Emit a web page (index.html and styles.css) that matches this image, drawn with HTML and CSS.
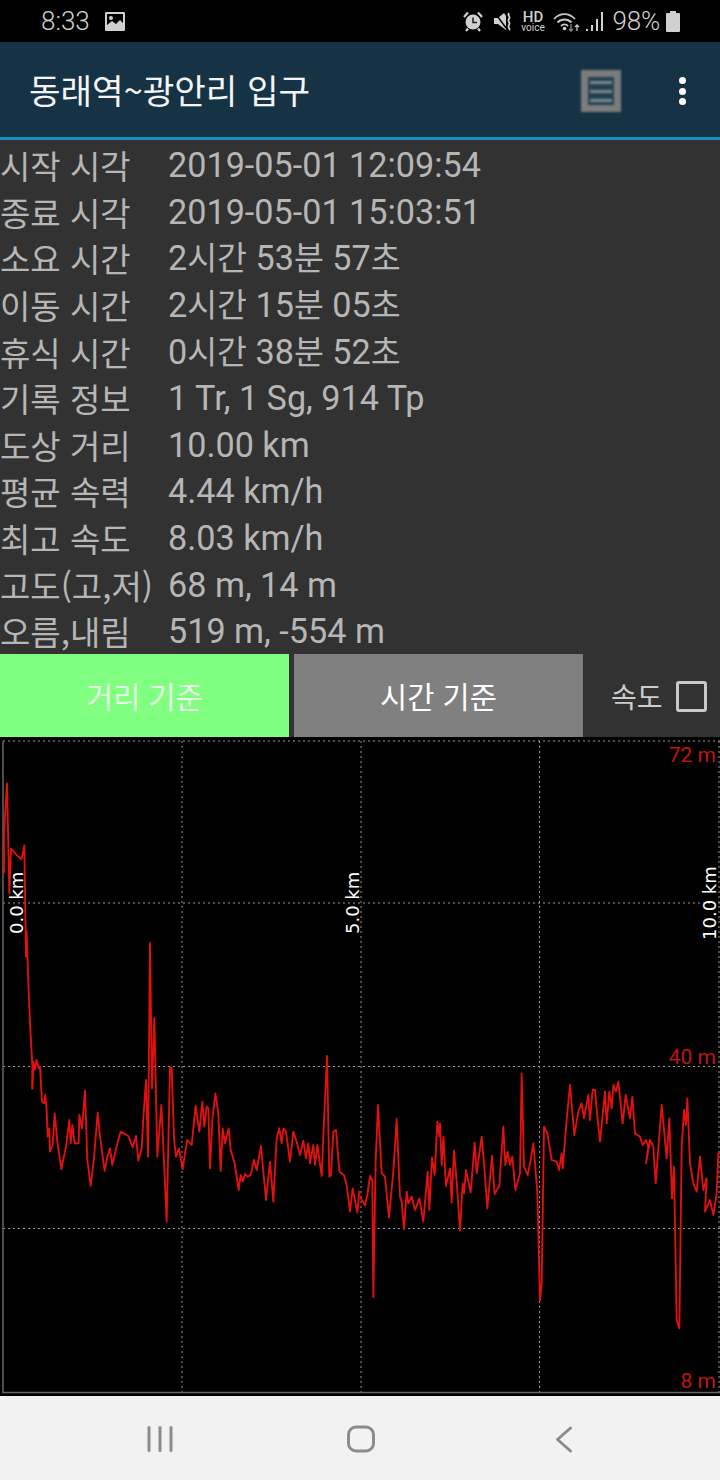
FILE: index.html
```html
<!DOCTYPE html>
<html lang="ko">
<head>
<meta charset="utf-8">
<title>동래역~광안리 입구</title>
<link rel="stylesheet" href="styles.css">
</head>
<body>
<div class="screen">
  <header class="statusbar">
    <div class="status-left">
      <span class="clock">8:33</span>
      <svg class="ic-image" width="20" height="19" viewBox="0 0 20 19"><path fill="#d0d0d0" fill-rule="evenodd" d="M1 0h18a1 1 0 0 1 1 1v17a1 1 0 0 1-1 1H1a1 1 0 0 1-1-1V1a1 1 0 0 1 1-1zm1 2v11l5-4 4 3 4-4 3 3V2z"/><circle cx="6" cy="6" r="2" fill="#d0d0d0"/></svg>
    </div>
    <div class="status-right">
      <svg class="ic-alarm" width="20" height="21" viewBox="0 0 20 21"><circle cx="10" cy="11" r="7.500" fill="#d0d0d0"/><path d="M10 6.500V11.500H14" fill="none" stroke="#222" stroke-width="1.600"/><path d="M1 6 5 1.500M19 6 15 1.500M3 20l2-2.500M17 20l-2-2.500" stroke="#d0d0d0" stroke-width="2.200" fill="none"/></svg>
      <svg class="ic-mute" width="20" height="21" viewBox="0 0 20 21"><path fill="#d0d0d0" d="M0 7h4l6-5 2 3v14l-8-6H0z"/><path d="M1 2 12 17" stroke="#000" stroke-width="1.500"/><path d="M15 2c-2 3 2 3 0 6s2 3 0 6 2 3 0 5" fill="none" stroke="#d0d0d0" stroke-width="1.800"/></svg>
      <span class="hd"><b class="hd-top">HD</b><b class="hd-sub">voice</b></span>
      <svg class="ic-wifi" width="27" height="21" viewBox="0 0 27 21"><path d="M1 8c6-6.500 15-6.500 21 0M4.500 11.500c4-4 10-4 14 0M8 15c2-2 5-2 7 0" fill="none" stroke="#c8c8c8" stroke-width="1.800"/><circle cx="11.500" cy="17.500" r="1.800" fill="#d0d0d0"/><path d="M18 13v7M16 18l2 2 2-2" fill="none" stroke="#8a8a8a" stroke-width="1.300"/><path d="M24 20v-6M22 16l2-2 2 2" fill="none" stroke="#c8c8c8" stroke-width="1.300"/></svg>
      <svg class="ic-signal" width="18" height="21" viewBox="0 0 18 21"><path d="M1 18v2M6 14v6M11 8v12M16 1v19" stroke="#d0d0d0" stroke-width="2" fill="none"/></svg>
      <span class="battery-pct">98%</span>
      <svg class="ic-battery" width="14" height="21" viewBox="0 0 14 21"><path fill="#d0d0d0" d="M4 0h6v2h3a1 1 0 0 1 1 1v17a1 1 0 0 1-1 1H1a1 1 0 0 1-1-1V3a1 1 0 0 1 1-1h3z"/></svg>
    </div>
  </header>

  <header class="appbar">
    <h1 class="title">동래역~광안리 입구</h1>
    <div class="menu-icon"><span class="menu-line"></span><span class="menu-line"></span><span class="menu-line"></span></div>
    <div class="overflow"><span class="dot"></span><span class="dot"></span><span class="dot"></span></div>
  </header>

  <dl class="info">
    <div class="row"><dt>시작 시각</dt><dd>2019-05-01 12:09:54</dd></div>
    <div class="row"><dt>종료 시각</dt><dd>2019-05-01 15:03:51</dd></div>
    <div class="row"><dt>소요 시간</dt><dd>2<span class="k">시간</span> 53<span class="k">분</span> 57<span class="k">초</span></dd></div>
    <div class="row"><dt>이동 시간</dt><dd>2<span class="k">시간</span> 15<span class="k">분</span> 05<span class="k">초</span></dd></div>
    <div class="row"><dt>휴식 시간</dt><dd>0<span class="k">시간</span> 38<span class="k">분</span> 52<span class="k">초</span></dd></div>
    <div class="row"><dt>기록 정보</dt><dd>1 Tr, 1 Sg, 914 Tp</dd></div>
    <div class="row"><dt>도상 거리</dt><dd>10.00 km</dd></div>
    <div class="row"><dt>평균 속력</dt><dd>4.44 km/h</dd></div>
    <div class="row"><dt>최고 속도</dt><dd>8.03 km/h</dd></div>
    <div class="row"><dt>고도(고,저)</dt><dd>68 m, 14 m</dd></div>
    <div class="row"><dt>오름,내림</dt><dd>519 m, -554 m</dd></div>
  </dl>

  <div class="controls">
    <button class="btn btn-on">거리 기준</button>
    <button class="btn btn-off">시간 기준</button>
    <div class="speed"><span class="speed-label">속도</span><span class="checkbox"></span></div>
  </div>

  <div class="chart">
    <svg class="chart-svg" width="720" height="659" viewBox="0 0 720 659">
      <g class="grid">
        <path d="M3 4H720M3 166H720M3 329.500H720M3 491.500H720M182 4V656M361 4V656M539.500 4V656M719 4V656"/>
      </g>
      <path class="axis" d="M3 4V655.500H720"/>
      <g class="trace">
        <g transform="translate(0 3) scale(.33333)">
          <polyline points="12,400 12,280 21,130 28,460 33,325 50,345 65,358 73,316 78,650 80,575 84,700 90,850 97,975 97,1048"/>
        </g>
        <g transform="translate(0 323) scale(.33333)">
          <polyline points="97,88 100,5 104,30 110,0 116,25 120,20 126,125 132,130 136,105 140,150 143,230 148,205 150,275 158,255 164,160 172,245 184,328 198,260 208,180 212,250 217,195 224,250 236,250 238,165 246,205 255,92 262,300 272,378 282,295 293,158 300,230 314,333 322,290 330,265 337,315 350,258 362,215 385,228 398,262 408,228 415,302 425,265 430,175 438,60 444,290 450,-351 456,85 463,-126 472,290 484,135 490,260 500,485 510,22 515,25 522,235 528,290 537,265 548,328 555,280 562,240 575,255 582,185 587,138 598,215 607,125 613,200 620,140 625,145 630,325 637,180 646,100 655,160 662,333 668,205 675,250 686,205 692,270 704,310 716,390 722,345 728,365 735,342 742,350 752,345 762,300 770,330 783,258 798,420 810,305 820,425 830,235 838,205 845,250 850,205 858,215 870,305 880,215 890,245 900,285 910,242 918,295 925,250 930,310 940,255 945,315 952,255 965,348 970,230 981,-12 988,350 993,345 1000,215 1008,210 1018,335 1032,345 1040,375 1050,455 1058,385 1072,458 1078,395 1080,400"/>
        </g>
        <g transform="translate(360 303) scale(.33333)">
          <polyline points="0,470 15,497 22,465 30,408 37,420 40,772 47,360 54,195 65,400 75,410 87,533 100,395 110,237 120,470 125,485 132,567 140,455 145,490 155,470 165,510 178,475 190,545 203,395 208,510 216,352 224,405 232,245 238,290 240,250 245,375 250,290 258,438 270,385 275,487 282,332 290,425 300,572 308,430 312,460 318,390 332,458 344,308 350,400 365,290 372,370 382,505 396,348 404,462 418,438 430,260 436,375 443,335 450,375 457,350 466,450 480,400 485,100 492,380 503,405 512,360 520,310 525,370 532,460 540,782 545,735 552,260 562,280 575,360 590,365 597,390 605,340 608,385 620,240 630,135 643,285 655,215 665,190 672,235 685,165 690,240 698,150 705,150 712,230 720,305 735,155 740,250 748,155 755,205 760,135 768,155 775,125 788,250 797,165 810,235 817,170 825,280 840,290 848,315 858,300 865,320 858,370 870,300 880,320 887,430 905,195 920,355 928,235 936,475 942,380 950,840 958,865 965,320 972,210 978,255 982,175 990,370 1000,430 1010,455 1020,350 1030,450 1040,415 1035,515 1050,480 1060,525 1070,460 1075,340 1080,340"/>
        </g>
      </g>
      <text class="y-label" x="716" y="25">72 m</text>
      <text class="y-label" x="716" y="327">40 m</text>
      <text class="y-label" x="716" y="651">8 m</text>
      <text class="x-label" transform="translate(23 197) rotate(-90)">0.0 km</text>
      <text class="x-label" transform="translate(359 197) rotate(-90)">5.0 km</text>
      <text class="x-label" transform="translate(716 203) rotate(-90)">10.0 km</text>
    </svg>
  </div>

  <nav class="navbar">
    <svg width="26" height="26" viewBox="0 0 26 26"><path d="M2 1.500V24.500M13 1.500V24.500M24 1.500V24.500" fill="none" stroke="#8c8c8c" stroke-width="3" stroke-linecap="round"/></svg>
    <svg width="28" height="28" viewBox="0 0 28 28"><rect x="1.500" y="2" width="25" height="24" rx="7.500" fill="none" stroke="#8c8c8c" stroke-width="3"/></svg>
    <svg width="18" height="27" viewBox="0 0 18 27"><path d="M15.500 2 2.500 13.500 15.500 25" fill="none" stroke="#8c8c8c" stroke-width="3" stroke-linecap="round" stroke-linejoin="round"/></svg>
  </nav>
</div>
</body>
</html>
```

FILE: styles.css
```css
* { box-sizing: border-box; }
html, body { margin: 0; padding: 0; }
body {
  width: 720px;
  height: 1480px;
  overflow: hidden;
  background: #323232;
  font-family: Roboto, "Noto Sans CJK KR", sans-serif;
}
.screen { display: flex; flex-direction: column; width: 720px; height: 1480px; }

.statusbar {
  height: 42px;
  background: #000;
  color: #d0d0d0;
  display: flex;
  align-items: center;
  justify-content: space-between;
  padding: 0 40px 0 41px;
}
.status-left, .status-right { display: flex; align-items: center; }
.clock { font-size: 26px; font-weight: 300; width: 64px; }
.battery-pct { font-size: 26px; font-weight: 300; margin: 0 6px 0 9px; letter-spacing: -.2px; }
.ic-alarm { margin-right: 11px; }
.hd { display: flex; flex-direction: column; align-items: center; margin: 0 8px 0 8px; width: 23px; line-height: 1; }
.hd-top { font-size: 15px; font-weight: 500; line-height: 12px; }
.hd-sub { font-size: 10px; font-weight: 400; line-height: 9px; }
.ic-wifi { margin-right: 6px; }

.appbar {
  height: 98px;
  background: #163345;
  border-bottom: 3px solid #1b8fbc;
  display: flex;
  align-items: center;
  padding: 3px 34px 0 29px;
}
.title {
  flex: 1;
  margin: 0 0 4px;
  font-size: 34.300px;
  font-weight: 400;
  color: #f4f4f4;
  font-family: "Noto Sans CJK KR", sans-serif;
}
.menu-icon {
  width: 40px;
  height: 42px;
  border: 7px solid #7c7c7c;
  background: #24404f;
  filter: blur(1px);
  display: flex;
  flex-direction: column;
  justify-content: center;
  gap: 6px;
  padding: 0 2px;
  margin-right: 58px;
}
.menu-line { height: 3px; flex: none; background: #7c8a94; }
.overflow { display: flex; flex-direction: column; gap: 3.500px; }
.dot { width: 7px; height: 7px; border-radius: 50%; background: #fff; }

.info { margin: 0; padding-top: 2px; height: 514px; }
.row { display: grid; grid-template-columns: 168px 1fr; height: 46.650px; line-height: 46.650px; font-size: 33px; color: #b6b6b6; white-space: nowrap; }
dt, dd { margin: 0; }
dt { font-family: "Noto Sans CJK KR", sans-serif; font-weight: 400; }
dd { font-size: 34.200px; font-weight: 400; font-family: Roboto, "Noto Sans CJK KR", sans-serif; }
.k { font-size: 32.500px; line-height: 0; font-family: "Noto Sans CJK KR", sans-serif; }

.controls { height: 83px; display: flex; align-items: stretch; }
.btn {
  width: 289px;
  border: 0;
  padding: 0 0 2px;
  font-family: "Noto Sans CJK KR", sans-serif;
  font-size: 29.500px;
  font-weight: 400;
}
.btn-on { background: #80ff80; color: #e6f8e6; }
.btn-off { background: #808080; color: #fff; margin-left: 5px; }
.speed { flex: 1; display: flex; align-items: center; padding-left: 28px; }
.speed-label { font-family: "Noto Sans CJK KR", sans-serif; font-weight: 400; font-size: 28px; color: #ccc; width: 65px; }
.checkbox { width: 31px; height: 31px; margin-top: 2px; border: 3px solid #c8c8c8; border-radius: 3px; }

.chart { height: 659px; background: #000; }
.chart-svg { display: block; }
.grid path { fill: none; stroke: #9a9a9a; stroke-width: 1; stroke-dasharray: 2 3; }
.axis { fill: none; stroke: #666; stroke-width: 1.500; }
.trace polyline { fill: none; stroke: #e41010; stroke-width: 5.500; stroke-linejoin: round; }
.y-label { font-family: Roboto, sans-serif; font-size: 21px; fill: #c01414; text-anchor: end; }
.x-label { font-family: "DejaVu Sans", sans-serif; font-size: 18px; fill: #fff; }

.navbar {
  flex: 1;
  background: #f2f2f2;
  display: grid;
  grid-template-columns: 147px 26px 174px 28px 180px 18px;
  align-items: center;
  padding-top: 2px;
}
.navbar svg:nth-child(1) { grid-column: 2; }
.navbar svg:nth-child(2) { grid-column: 4; }
.navbar svg:nth-child(3) { grid-column: 6; }
```
